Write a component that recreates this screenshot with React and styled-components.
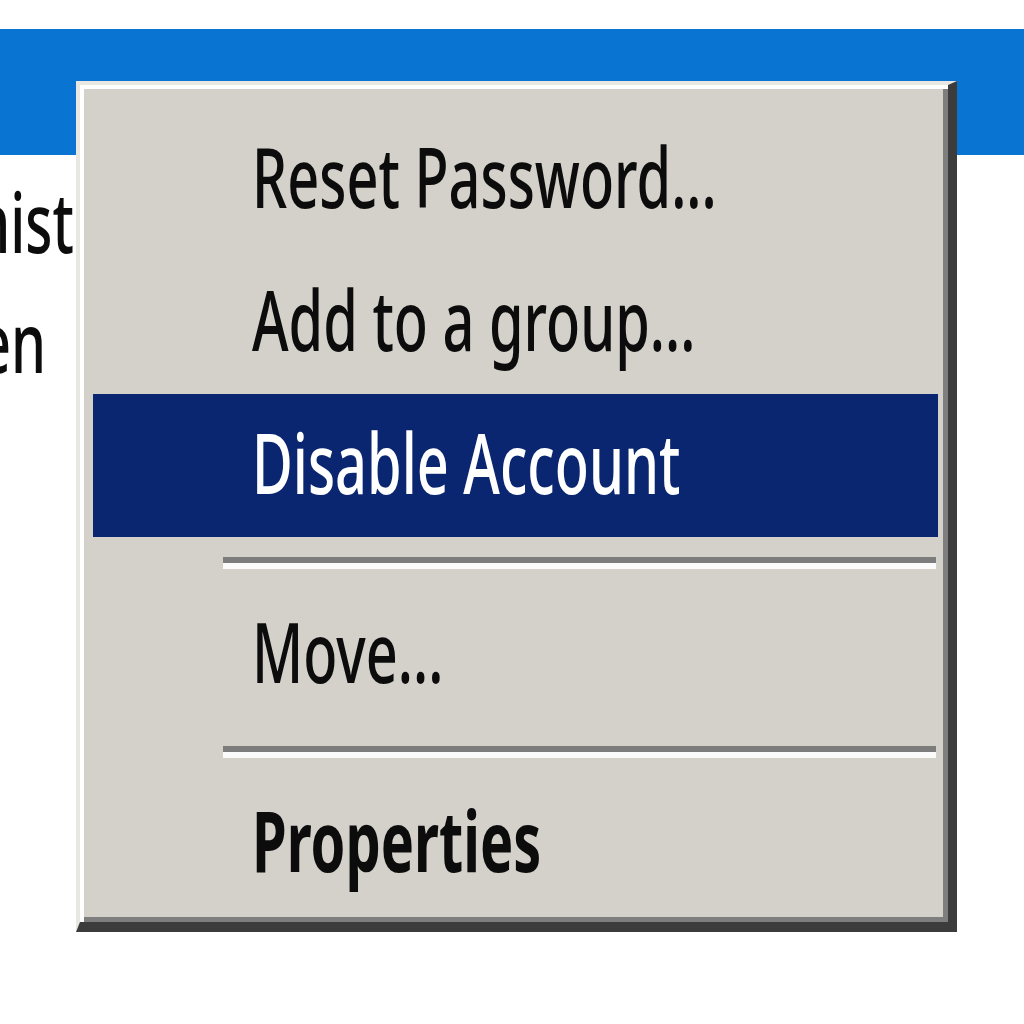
import React from "react";
import styled, { createGlobalStyle } from "styled-components";

const GlobalStyle = createGlobalStyle`
  html, body {
    margin: 0;
    padding: 0;
    background: #ffffff;
    overflow: hidden;
  }
  body {
    font-family: "Noto Sans", "Open Sans", "DejaVu Sans", sans-serif;
  }
`;

const Page = styled.div`
  position: relative;
  width: 1024px;
  height: 1024px;
  overflow: hidden;
  padding-top: 29px;
  box-sizing: border-box;
`;

const TitleBar = styled.div`
  height: 126px;
  background: #0a74d2;
`;

const List = styled.div`
  display: flex;
  flex-direction: column;
  padding-top: 6px;
`;

const ListRow = styled.div`
  height: 120px;
  line-height: 120px;
  white-space: nowrap;
`;

const Label = styled.span`
  display: inline-block;
  font-size: 84px;
  color: ${({ light }) => (light ? "#ffffff" : "#0c0c0c")};
  font-weight: ${({ bold }) => (bold ? 700 : 500)};
  transform: scaleX(${({ sx }) => sx || 0.665});
  transform-origin: left center;
  margin-left: ${({ shift }) => shift || 0}px;
`;

const Menu = styled.div`
  position: absolute;
  left: 76px;
  top: 81px;
  width: 881px;
  height: 851px;
  box-sizing: border-box;
  background: #d4d1cb;
  border-style: solid;
  border-width: 4px 9px 10px 4px;
  border-color: #e9e7e2 #3c3c3c #3c3c3c #e9e7e2;
  box-shadow: inset 4px 4px 0 #ffffff, inset -5px -5px 0 #7e7e7e;
  padding: 23px 10px 7px 13px;
  display: flex;
  flex-direction: column;
`;

const Item = styled.div`
  height: 143px;
  flex: none;
  padding-left: 159px;
  box-sizing: border-box;
  line-height: 135px;
  white-space: nowrap;
  background: ${({ active }) => (active ? "#0b2670" : "transparent")};
`;

const Separator = styled.div`
  height: 46px;
  flex: none;
  padding: 20px 2px 0 130px;
  box-sizing: border-box;

  &::before {
    content: "";
    display: block;
    height: 6px;
    background: #7c7c7c;
    border-bottom: 6px solid #fbfbfb;
  }
`;

const items = [
  { label: "Reset Password..." },
  { label: "Add to a group..." },
  { label: "Disable Account", active: true },
  { sep: true },
  { label: "Move..." },
  { sep: true },
  { label: "Properties", bold: true },
];

export default function App() {
  return (
    <>
      <GlobalStyle />
      <Page>
        <TitleBar />
        <List>
          <ListRow>
            <Label shift={-164}>Administrator</Label>
          </ListRow>
          <ListRow>
            <Label shift={-110}>Helen</Label>
          </ListRow>
        </List>
        <Menu>
          {items.map((it, i) =>
            it.sep ? (
              <Separator key={i} />
            ) : (
              <Item key={i} active={it.active}>
                <Label light={it.active} bold={it.bold}>
                  {it.label}
                </Label>
              </Item>
            )
          )}
        </Menu>
      </Page>
    </>
  );
}
